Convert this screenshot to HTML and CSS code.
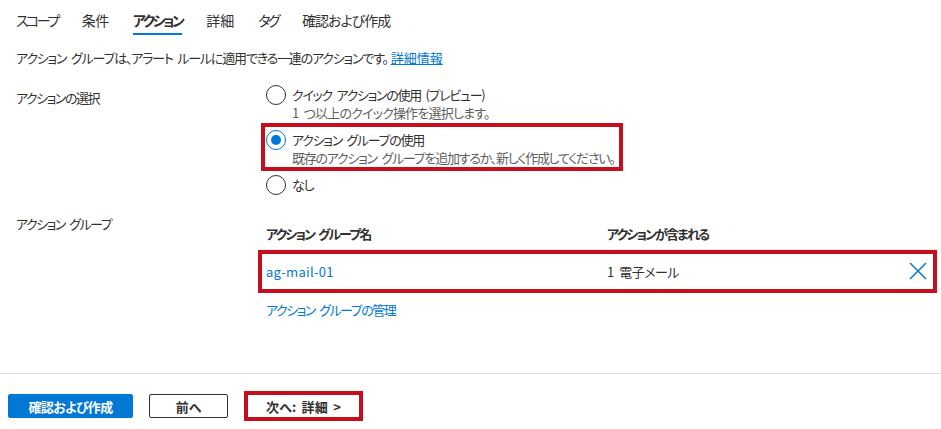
FILE: index.html
```html
<!DOCTYPE html>
<html lang="ja">
<head>
<meta charset="utf-8">
<title>アクション</title>
<link rel="stylesheet" href="styles.css">
</head>
<body>
<div class="page">
  <nav class="tabs">
    <span class="tab tab-kana">スコープ</span>
    <span class="tab tab-kanji">条件</span>
    <span class="tab tab-kana active">アクション</span>
    <span class="tab">詳細</span>
    <span class="tab tab-kana">タグ</span>
    <span class="tab tab-mixed">確認および作成</span>
  </nav>

  <p class="desc">アクション グループは、アラート ルールに適用できる一連のアクションです。<a href="#" class="link underline">詳細情報</a></p>

  <div class="field field-select">
    <div class="label">アクションの選択</div>
    <div class="options">
      <div class="option">
        <span class="radio"></span>
        <div class="opt-text">
          <div class="opt-title">クイック アクションの使用 (プレビュー)</div>
          <div class="opt-sub opt-sub-loose">1 つ以上のクイック操作を選択します。</div>
        </div>
      </div>
      <div class="option highlighted">
        <span class="radio checked"></span>
        <div class="opt-text">
          <div class="opt-title">アクション グループの使用</div>
          <div class="opt-sub">既存のアクション グループを追加するか、新しく作成してください。</div>
        </div>
        <span class="mark mark-option"></span>
      </div>
      <div class="option">
        <span class="radio"></span>
        <div class="opt-text">
          <div class="opt-title">なし</div>
        </div>
      </div>
    </div>
  </div>

  <div class="field field-groups">
    <div class="label">アクション グループ</div>
    <div class="groups">
      <div class="table">
        <div class="trow thead">
          <div class="cell c1">アクション グループ名</div>
          <div class="cell c2">アクションが含まれる</div>
          <div class="cell c3"></div>
        </div>
        <div class="trow tbody">
          <div class="cell c1"><a href="#" class="link group-name">ag-mail-01</a></div>
          <div class="cell c2 count">1 電子メール</div>
          <div class="cell c3">
            <svg class="xicon" width="18" height="18" viewBox="0 0 18 18"><path d="M1 1 L17 17 M17 1 L1 17" stroke="#0078d4" stroke-width="1.5" fill="none"/></svg>
          </div>
          <span class="mark mark-row"></span>
        </div>
      </div>
      <a href="#" class="link manage">アクション グループの管理</a>
    </div>
  </div>

  <footer class="footer">
    <button class="btn primary">確認および作成</button>
    <button class="btn secondary">前へ</button>
    <button class="btn next">次へ: 詳細 &gt;</button>
  </footer>
</div>
</body>
</html>
```

FILE: styles.css
```css
* { box-sizing: border-box; }

html, body {
  margin: 0;
  padding: 0;
  background: #ffffff;
}

body {
  font-family: "Noto Sans CJK JP", "Noto Sans", sans-serif;
  font-size: 13px;
  color: #323130;
  font-feature-settings: "palt";
  word-spacing: 3px;
}

.page {
  width: 941px;
  height: 429px;
  overflow: hidden;
}

/* Tabs */
.tabs {
  display: flex;
  gap: 24px;
  padding-left: 16px;
}

.tab {
  font-size: 14px;
  line-height: 20px;
  padding-top: 10px;
  padding-bottom: 3px;
  border-bottom: 2px solid transparent;
  white-space: nowrap;
}

.tab-kana { letter-spacing: -2.5px; }
.tab-kanji { letter-spacing: -0.5px; }
.tab-mixed { letter-spacing: -1px; }

.tab.active {
  font-weight: 700;
  border-bottom-color: #0078d4;
}

/* Description */
.desc {
  margin: 13px 0 0 16px;
  line-height: 20px;
  letter-spacing: -1.2px;
  white-space: nowrap;
}

.link {
  color: #0078d4;
  text-decoration: none;
}

.link.underline {
  text-decoration: underline;
}

.desc .link {
  letter-spacing: 0;
  margin-left: 3px;
}

/* Form fields */
.field {
  display: grid;
  grid-template-columns: 250px 1fr;
  padding-left: 16px;
}

.field-select {
  margin-top: 17px;
}

.label {
  line-height: 20px;
  letter-spacing: -1.5px;
}

.field-select .label {
  padding-top: 3px;
}

.options {
  display: flex;
  flex-direction: column;
  gap: 8px;
}

.option {
  position: relative;
  display: flex;
  gap: 6px;
  align-items: flex-start;
  white-space: nowrap;
}

.radio {
  flex: none;
  width: 20px;
  height: 20px;
  border: 1px solid #323130;
  border-radius: 50%;
  display: flex;
  align-items: center;
  justify-content: center;
}

.radio.checked {
  border-color: #0078d4;
}

.radio.checked::after {
  content: "";
  width: 10px;
  height: 10px;
  border-radius: 50%;
  background: #0078d4;
}

.opt-title {
  line-height: 18px;
  margin-top: 1px;
  letter-spacing: -1.3px;
}

.opt-sub {
  line-height: 18px;
  color: #605e5c;
  letter-spacing: -1.25px;
}

.opt-sub-loose {
  letter-spacing: -0.8px;
}

/* Annotation boxes */
.mark {
  position: absolute;
  border: 4px solid #c50f1f;
  pointer-events: none;
}

.mark-option {
  top: -7px;
  left: -5px;
  width: 362px;
  height: 48px;
}

/* Action groups */
.field-groups {
  margin-top: 19px;
}

.groups {
  margin-left: -8px;
  padding-top: 4px;
}

.table {
  width: 679px;
}

.trow {
  position: relative;
  display: grid;
  grid-template-columns: 341px 1fr 40px;
  align-items: center;
}

.thead {
  height: 32px;
  font-weight: 700;
  letter-spacing: -1.9px;
  border-bottom: 1px solid #edebe9;
}

.tbody {
  height: 42px;
}

.cell {
  padding-left: 8px;
  white-space: nowrap;
}

.group-name {
  letter-spacing: 0.3px;
}

.count {
  letter-spacing: -0.5px;
}

.c3 {
  display: flex;
  justify-content: flex-end;
  padding-right: 10px;
}

.xicon {
  display: block;
}

.mark-row {
  top: 0;
  left: 0;
  right: 0;
  bottom: -1px;
}

.manage {
  display: block;
  margin-top: 8px;
  margin-left: 8px;
  line-height: 20px;
  letter-spacing: -1.5px;
}

/* Footer */
.footer {
  margin-top: 53px;
  border-top: 1px solid #e1dfdd;
  display: flex;
  align-items: center;
  gap: 16px;
  padding: 17px 0 0 8px;
}

.btn {
  font-family: inherit;
  font-feature-settings: "palt";
  font-size: 13px;
  font-weight: 700;
  height: 24px;
  padding: 0;
  border-radius: 2px;
  cursor: pointer;
  white-space: nowrap;
  word-spacing: 2px;
}

.btn.primary {
  width: 125px;
  background: #0078d4;
  border: 1px solid #0078d4;
  color: #ffffff;
  letter-spacing: -0.7px;
}

.btn.secondary {
  width: 79px;
  background: #ffffff;
  border: 1px solid #323130;
  color: #323130;
}

.btn.next {
  width: 119px;
  height: 30px;
  background: #ffffff;
  border: 4px solid #c50f1f;
  border-radius: 0;
  color: #323130;
  letter-spacing: 0.2px;
}
```
